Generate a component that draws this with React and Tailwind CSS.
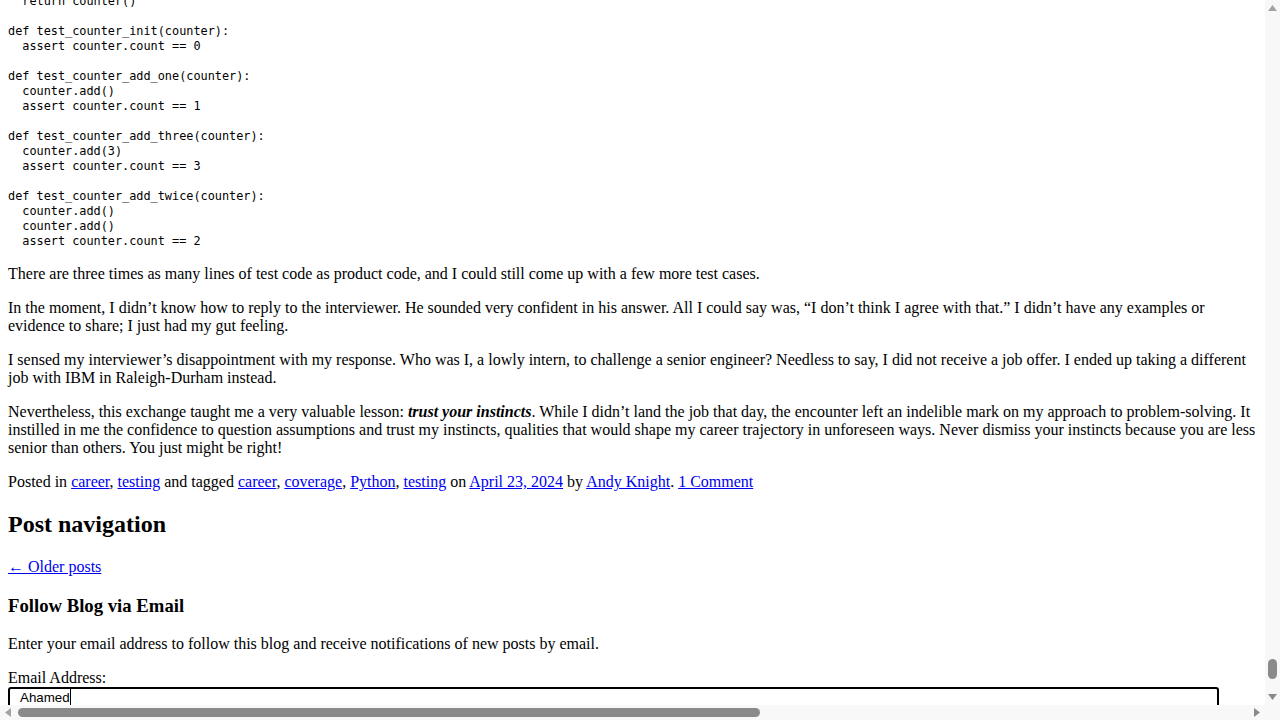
const code = `  return counter()

def test_counter_init(counter):
  assert counter.count == 0

def test_counter_add_one(counter):
  counter.add()
  assert counter.count == 1

def test_counter_add_three(counter):
  counter.add(3)
  assert counter.count == 3

def test_counter_add_twice(counter):
  counter.add()
  counter.add()
  assert counter.count == 2`;

function A({ children }) {
    return <a href="#" className="text-[#0000ee] underline">{children}</a>;
}

export default function App() {
    return (
        <div className="w-[1280px] h-[720px] grid grid-cols-[1265px_15px] grid-rows-[705px_15px] overflow-hidden bg-white text-black">
            {/* scrolled page */}
            <div className="overflow-hidden" style={{ fontFamily: '"Liberation Serif", "Times New Roman", serif' }}>
                <div className="w-[1249px] ml-2 -mt-[6px] text-[16px] leading-[18px]">
                    <pre className="text-[11.85px] leading-[15px] whitespace-pre" style={{ fontFamily: '"DejaVu Sans Mono", Consolas, monospace' }}>{code}</pre>

                    <p className="mt-4">There are three times as many lines of test code as product code, and I could still come up with a few more test cases.</p>

                    <p className="mt-4">In the moment, I didn’t know how to reply to the interviewer. He sounded very confident in his answer. All I could say was, “I don’t think I agree with that.” I didn’t have any examples or evidence to share; I just had my gut feeling.</p>

                    <p className="mt-4">I sensed my interviewer’s disappointment with my response. Who was I, a lowly intern, to challenge a senior engineer? Needless to say, I did not receive a job offer. I ended up taking a different job with IBM in Raleigh-Durham instead.</p>

                    <p className="mt-4">Nevertheless, this exchange taught me a very valuable lesson: <strong><em>trust your instincts</em></strong>. While I didn’t land the job that day, the encounter left an indelible mark on my approach to problem-solving. It instilled in me the confidence to question assumptions and trust my instincts, qualities that would shape my career trajectory in unforeseen ways. Never dismiss your instincts because you are less senior than others. You just might be right!</p>

                    <p className="mt-4">
                        Posted in <A>career</A>, <A>testing</A> and tagged <A>career</A>, <A>coverage</A>, <A>Python</A>, <A>testing</A> on <A>April 23, 2024</A> by <A>Andy Knight</A>. <A>1 Comment</A>
                    </p>

                    <h2 className="mt-[20px] text-[24px] leading-[27px] font-bold">Post navigation</h2>

                    <p className="mt-[20px]"><A>← Older posts</A></p>

                    <h3 className="mt-[19px] text-[18.72px] leading-[21px] font-bold">Follow Blog via Email</h3>

                    <p className="mt-[19px]">Enter your email address to follow this blog and receive notifications of new posts by email.</p>

                    <p className="mt-4">Email Address:</p>
                    <div className="w-[1211px] h-[30px] border-2 border-black rounded-[3px] pl-[10px] flex items-start text-[13.33px] leading-[17px]" style={{ fontFamily: '"Liberation Sans", Arial, sans-serif' }}>
                        <span>Ahamed</span>
                        <span className="w-px h-[16px] bg-black"></span>
                    </div>
                </div>
            </div>

            {/* vertical scrollbar */}
            <div className="bg-[#f8f8f8] relative">
                <svg className="absolute left-[3px] top-[5px]" width="9" height="6" viewBox="0 0 9 6"><path d="M4.5 0 L9 6 L0 6 Z" fill="#a3a3a3" /></svg>
                <div className="absolute left-[3px] top-[659px] w-[9px] h-[20px] rounded-full bg-[#8a8a8a]"></div>
                <svg className="absolute left-[3px] top-[694px]" width="9" height="6" viewBox="0 0 9 6"><path d="M0 0 L9 0 L4.5 6 Z" fill="#8a8a8a" /></svg>
            </div>

            {/* horizontal scrollbar */}
            <div className="bg-[#f8f8f8] relative">
                <svg className="absolute left-[5px] top-[3px]" width="6" height="9" viewBox="0 0 6 9"><path d="M6 0 L6 9 L0 4.5 Z" fill="#a3a3a3" /></svg>
                <div className="absolute left-[18px] top-[3px] w-[742px] h-[9px] rounded-full bg-[#8a8a8a]"></div>
                <svg className="absolute left-[1254px] top-[3px]" width="6" height="9" viewBox="0 0 6 9"><path d="M0 0 L6 4.5 L0 9 Z" fill="#8a8a8a" /></svg>
            </div>
            <div className="bg-[#f8f8f8]"></div>
        </div>
    );
}
